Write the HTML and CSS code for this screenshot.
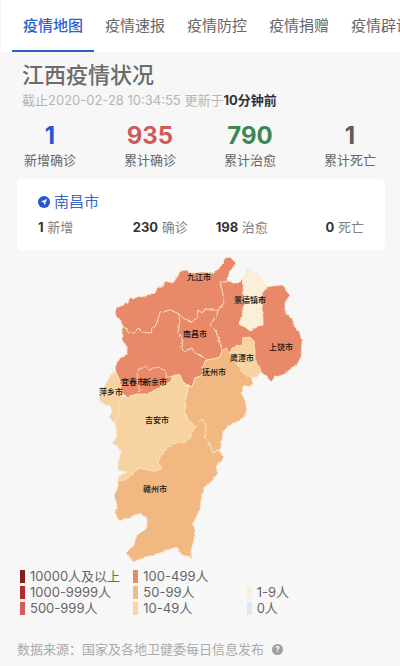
FILE: index.html
```html
<!doctype html><html lang="zh-CN">
<head><meta charset="utf-8"/><title>江西疫情状况</title>
<meta name="viewport" content="width=device-width, initial-scale=1">
<link rel="stylesheet" href="styles.css">
</head>
<body>

<nav class="tabs">
	<a href="#map" class="tab active">疫情地图</a>
	<a href="#news" class="tab">疫情速报</a>
	<a href="#guard" class="tab">疫情防控</a>
	<a href="#donate" class="tab">疫情捐赠</a>
	<a href="#rumor" class="tab">疫情辟谣</a>
</nav>

<main id="map">
	<header class="head">
		<h1>江西疫情状况</h1>
		<p class="stamp">截止2020-02-28 10:34:55 更新于<b>10分钟前</b></p>
	</header>

	<ul class="totals">
		<li><strong class="blue">1</strong>新增确诊</li>
		<li><strong class="red">935</strong>累计确诊</li>
		<li><strong class="green">790</strong>累计治愈</li>
		<li><strong class="gray">1</strong>累计死亡</li>
	</ul>

	<section class="card">
		<h2>
			<svg class="pin" viewBox="0 0 12 12" aria-hidden="true"><circle cx="6" cy="6" r="6"/><path d="M9 3 6.700 9.200 5.600 6.500 2.900 5.400z" fill="#fff"/></svg>
			南昌市
		</h2>
		<ul class="city">
			<li><b>1</b> 新增</li>
			<li><b>230</b> 确诊</li>
			<li><b>198</b> 治愈</li>
			<li><b>0</b> 死亡</li>
		</ul>
	</section>

	<svg class="province" viewBox="95 250 210 315" role="img" aria-label="江西省地图">
		<filter id="coast" x="-5%" y="-5%" width="110%" height="110%">
			<feTurbulence type="fractalNoise" baseFrequency="0.2" numOctaves="2" seed="4"/>
			<feDisplacementMap in="SourceGraphic" scale="3" xChannelSelector="R" yChannelSelector="G"/>
		</filter>
		<g class="areas" filter="url(#coast)">
			<!-- 上饶 -->
			<path class="lv3" d="M220 282 227 282 237 283 242 278 243 287 258 300 262 293 267 287 272 286 283 285 287 292 290 295 285 303 285 313 292 318 295 327 300 333 302 343 301 357 298 363 292 368 283 375 275 377 271 382 267 377 261 372 230 353 226 349 222 350 218 337 215 330 210 325 217 315 218 310 224 303 222 290z"/>
			<!-- 九江 -->
			<path class="lv3" d="M115 313 117 308 128 302 130 297 133 299 145 296 155 293 158 286 163 287 165 281 173 283 178 276 180 271 187 270 191 273 203 272 212 273 220 268 225 258 230 257 236 263 230 272 227 278 227 282 220 282 222 290 224 303 218 310 212 310 205 309 202 313 198 310 197 317 192 322 183 318 177 313 170 310 160 313 156 325 150 333 143 332 138 328 135 333 128 332 123 326 120 320z"/>
			<!-- 宜春 -->
			<path class="lv3" d="M123 326 128 332 135 333 138 328 143 332 150 333 156 325 160 313 170 310 177 313 180 320 178 333 182 338 181 348 185 352 192 348 195 353 207 359 202 367 203 375 195 378 192 387 183 382 180 375 175 375 147 394 138 394 127 397 122 393 121 384 116 372 115 367 120 358 127 355 127 347 122 340 122 330z"/>
			<!-- 南昌 -->
			<path class="lv3" d="M177 313 183 318 192 322 197 317 198 310 202 313 205 309 212 310 218 310 217 315 210 325 215 330 218 337 222 350 220 357 213 359 207 360 203 356 195 353 192 348 185 352 181 348 182 338 178 333 180 320z"/>
			<!-- 景德镇 -->
			<path class="lv6" d="M248 267 252 272 258 274 262 282 267 287 262 293 258 298 262 307 263 318 263 325 257 327 250 331 245 327 239 325 241 318 243 310 244 298 243 287 242 278 247 273z"/>
			<!-- 抚州 -->
			<path class="lv4" d="M222 350 226 349 230 353 243 373 252 378 252 385 243 387 241 393 245 400 247 410 244 417 238 422 228 426 223 432 222 440 220 450 212 452 210 445 205 438 206 425 202 418 197 425 195 428 187 418 185 410 186 395 188 387 192 387 195 378 203 375 202 367 207 360 213 359 220 357z"/>
			<!-- 鹰潭 -->
			<path class="lv5" d="M230 353 232 348 242 345 243 338 250 337 253 340 255 350 255 360 260 368 261 372 257 377 250 377 243 373 238 365 232 360z"/>
			<!-- 萍乡 -->
			<path class="lv5" d="M116 372 110 375 107 383 102 388 99 403 108 405 112 410 110 418 115 424 120 412 118 405 123 398 122 393 121 384z"/>
			<!-- 吉安 -->
			<path class="lv5" d="M123 396 127 397 138 394 147 394 155 390 163 385 170 382 175 375 180 375 183 382 188 387 186 395 185 410 187 418 195 428 190 435 188 442 175 443 167 448 160 457 158 463 162 468 157 471 148 470 140 468 133 474 125 480 118 481 120 476 127 472 118 470 118 463 121 453 118 447 112 443 117 437 115 422 120 412 118 405z"/>
			<!-- 新余 -->
			<path class="lv3" d="M138 394 140 390 137 380 138 370 145 366 150 370 158 367 165 370 167 377 173 378 170 382 163 385 155 390 147 394z"/>
			<!-- 赣州 -->
			<path class="lv4" d="M195 428 197 425 202 418 206 425 205 438 210 445 212 452 220 450 223 458 216 467 218 473 213 480 205 487 201 500 200 510 193 523 195 530 194 540 191 550 192 559 182 555 177 547 167 550 155 555 145 557 133 562 126 553 134 545 137 535 147 528 147 518 140 513 128 518 118 520 115 512 117 505 114 495 118 487 118 481 125 480 133 474 140 468 148 470 157 471 162 468 158 463 160 457 167 448 175 443 188 442 190 435z"/>
		</g>
		<g class="names">
			<text x="199" y="280">九江市</text>
			<text x="250" y="303">景德镇市</text>
			<text x="195" y="337">南昌市</text>
			<text x="281" y="350">上饶市</text>
			<text x="242" y="361">鹰潭市</text>
			<text x="214" y="375">抚州市</text>
			<text x="133" y="385">宜春市</text>
			<text x="155" y="385">新余市</text>
			<text x="111" y="395">萍乡市</text>
			<text x="157" y="423">吉安市</text>
			<text x="155" y="492">赣州市</text>
		</g>
	</svg>

	<ul class="legend">
		<li class="k0">10000人及以上</li>
		<li class="k1">1000-9999人</li>
		<li class="k2">500-999人</li>
		<li class="k3">100-499人</li>
		<li class="k4">50-99人</li>
		<li class="k5">10-49人</li>
		<li class="k6">1-9人</li>
		<li class="k7">0人</li>
	</ul>
</main>

<footer class="source">
	数据来源：国家及各地卫健委每日信息发布
	<button type="button" class="help" aria-label="说明">?</button>
</footer>

</body></html>
```

FILE: styles.css
```css
* {box-sizing: border-box;}
body {
	margin: 0;
	background: #f7f7f7;
	color: #666;
	font: 13px/16px Inter, "Noto Sans CJK SC", sans-serif;
	overflow-x: hidden;
}
h1, h2, p, ul {margin: 0; padding: 0; font-weight: 400;}
ul {list-style: none;}

/* タブ */
.tabs {
	display: flex;
	margin-left: 1px;
	padding-left: 11px;
	background: #fff;
	overflow: hidden;
}
.tab {
	flex: none;
	padding: 14px 11px 12px;
	border-bottom: 2px solid transparent;
	color: #666;
	font-size: 15px;
	line-height: 24px;
	text-decoration: none;
}
.tab.active {
	border-color: #2a62c4;
	color: #2a62d0;
	font-weight: 500;
}

.head {padding: 9px 22px 0;}
.head h1 {
	color: #6b6b6b;
	font-size: 22px;
	font-weight: 500;
	line-height: 28px;
}
.stamp {
	padding-top: 1px;
	color: #b5b5b5;
	line-height: 20px;
}
.stamp b {color: #333;}

/* 合計 */
.totals {
	display: grid;
	grid-template-columns: repeat(4, 1fr);
	padding-top: 10px;
	text-align: center;
	line-height: 18px;
}
.totals strong {
	display: block;
	font-size: 24px;
	line-height: 31px;
}
.blue {color: #2456d6;}
.red {color: #d05a5a;}
.green {color: #3c8755;}
.gray {color: #5c5c5c;}

.card {
	margin: 10px 15px 0 17px;
	padding: 12px 21px 13px;
	border-radius: 5px;
	background: #fff;
}
.card h2 {
	display: flex;
	align-items: center;
	gap: 4px;
	color: #3a68c8;
	font-size: 15px;
	line-height: 22px;
}
.pin {
	width: 12px;
	height: 12px;
	fill: #2456d6;
}
.city {
	display: grid;
	grid-template-columns: repeat(4, 1fr);
	padding-top: 4px;
	color: #808080;
	line-height: 20px;
	text-align: center;
}
.city b {color: #333;}
.city li:first-child {text-align: left;}
.city li:last-child {text-align: right;}

/* 地図 */
.province {
	display: block;
	width: 52%;
	min-width: 210px;
	max-width: 320px;
	margin: 0 auto;
}
.areas path {
	stroke: #fbe3c4;
	stroke-width: 0.8;
	stroke-linejoin: round;
}
.lv3 {fill: #e88a69;}
.lv4 {fill: #f2b882;}
.lv5 {fill: #f8d3a2;}
.lv6 {fill: #fcefd9;}
.names {
	fill: #111;
	font-size: 8px;
	font-weight: 500;
	text-anchor: middle;
}

/* 凡例 */
.legend {
	display: grid;
	grid-template-columns: repeat(3, 1fr);
	grid-template-rows: repeat(3, 16px);
	grid-auto-flow: column;
	padding: 3px 40px 0 20px;
}
.legend li {
	display: flex;
	align-items: center;
	gap: 5px;
}
.legend li::before {
	content: "";
	width: 5px;
	height: 13px;
	background: var(--c);
}
.k0 {--c: #861c1c;}
.k1 {--c: #b02c2c;}
.k2 {--c: #d05c5c;}
.k3 {--c: #e38b6c;}
.k4 {--c: #efb988;}
.k5 {--c: #f9d5a8;}
.k6 {--c: #fdeed8; grid-row: 2; grid-column: 3;}
.k7 {--c: #e0e6f5; grid-row: 3; grid-column: 3;}

.source {
	display: flex;
	align-items: center;
	gap: 8px;
	padding: 23px 17px 6px;
	color: #aaa;
	line-height: 20px;
}
.help {
	width: 11px;
	height: 11px;
	padding: 0;
	border: 0;
	border-radius: 50%;
	background: #a0a0a0;
	color: #fff;
	font: 700 8px/11px Inter, sans-serif;
}
```
